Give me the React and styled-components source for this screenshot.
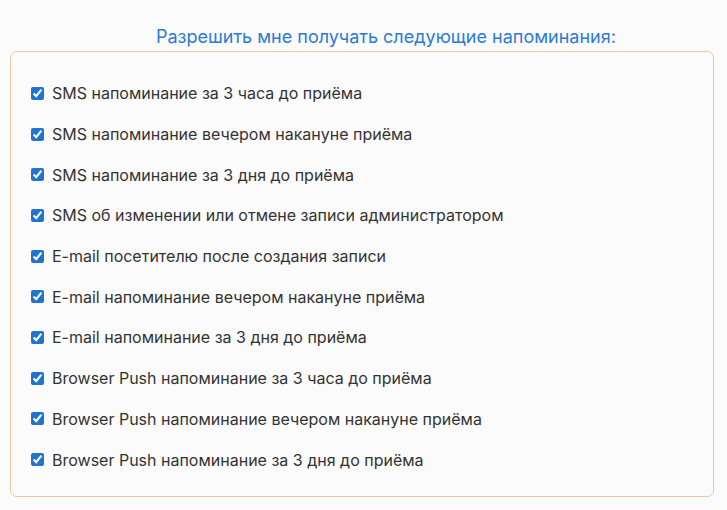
import React, { useState } from 'react';
import styled, { createGlobalStyle } from 'styled-components';

const GlobalStyle = createGlobalStyle`
  body {
    margin: 0;
    background: #fbfbfb;
    font-family: Inter, "Noto Sans", sans-serif;
  }
`;

const Page = styled.div`
  padding: 23px 13px 13px 10px;
`;

const Title = styled.div`
  padding-left: 146px;
  font-size: 18px;
  line-height: 28px;
  color: #2b7bd6;
`;

const Box = styled.div`
  box-sizing: border-box;
  width: 704px;
  height: 446px;
  border: 1px solid #f6c796;
  border-radius: 7px;
  padding: 21px 0 0 16px;
  display: flex;
  flex-direction: column;
`;

const Row = styled.label`
  display: flex;
  align-items: center;
  height: 40.7px;
  font-size: 16px;
  color: #333;
  cursor: pointer;
`;

const Check = styled.input`
  width: 13px;
  height: 13px;
  margin: 0 8px 0 4px;
  accent-color: #1f73d3;
`;

const items = [
  'SMS напоминание за 3 часа до приёма',
  'SMS напоминание вечером накануне приёма',
  'SMS напоминание за 3 дня до приёма',
  'SMS об изменении или отмене записи администратором',
  'E-mail посетителю после создания записи',
  'E-mail напоминание вечером накануне приёма',
  'E-mail напоминание за 3 дня до приёма',
  'Browser Push напоминание за 3 часа до приёма',
  'Browser Push напоминание вечером накануне приёма',
  'Browser Push напоминание за 3 дня до приёма',
];

const App = () => {
  const [checked, setChecked] = useState(items.map(() => true));

  const toggle = (i) =>
    setChecked(checked.map((v, j) => (j === i ? !v : v)));

  return (
    <Page>
      <GlobalStyle />
      <Title>Разрешить мне получать следующие напоминания:</Title>
      <Box>
        {items.map((text, i) => (
          <Row key={text}>
            <Check type="checkbox" checked={checked[i]} onChange={() => toggle(i)} />
            {text}
          </Row>
        ))}
      </Box>
    </Page>
  );
};

export default App;
